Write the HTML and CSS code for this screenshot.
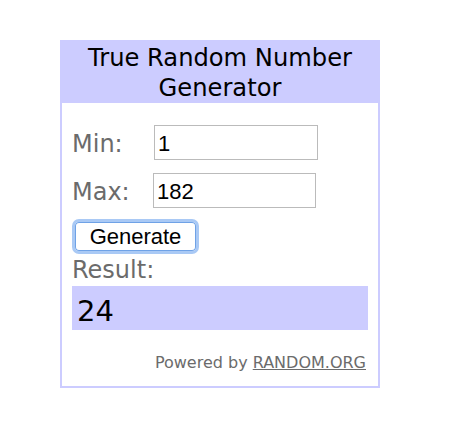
FILE: index.html
```html
<!DOCTYPE html>
<html>
<head>
<meta charset="utf-8">
<link rel="stylesheet" href="styles.css">
</head>
<body>
<div class="widget">
  <div class="header">True Random Number<br>Generator</div>
  <div class="content">
    <div class="row">
      <span class="label">Min:</span>
      <input class="field" type="text" value="1">
    </div>
    <div class="row">
      <span class="label">Max:</span>
      <input class="field field-max" type="text" value="182">
    </div>
    <button class="generate">Generate</button>
    <div class="result-label">Result:</div>
    <div class="result">24</div>
    <div class="powered">Powered by <a class="link" href="#">RANDOM.ORG</a></div>
  </div>
</div>
</body>
</html>
```

FILE: styles.css
```css
html, body {
  margin: 0;
  padding: 0;
  background: #ffffff;
}

body {
  padding: 40px 0 0 60px;
  font-family: "DejaVu Sans", Verdana, sans-serif;
}

.widget {
  width: 320px;
  box-sizing: border-box;
  border: 2px solid #ccccff;
  border-top: none;
  background: #ffffff;
}

.header {
  margin: 0 -2px;
  background: #ccccff;
  height: 63px;
  box-sizing: border-box;
  padding-top: 3px;
  text-align: center;
  font-size: 24.2px;
  line-height: 30px;
  color: #000000;
}

.content {
  padding: 22px 10px 13px 10px;
}

.row {
  display: flex;
  align-items: center;
  height: 35px;
  margin-bottom: 13px;
}

.row:nth-child(2) {
  margin-bottom: 11px;
}

.label {
  width: 82px;
  font-size: 24px;
  color: #6b6b6b;
  padding-top: 2px;
}

.field {
  width: 164px;
  height: 35px;
  box-sizing: border-box;
  border: 1px solid #bbbbbb;
  padding: 2px 3px 0 3px;
  margin: 0;
  font-family: "Liberation Sans", Arial, sans-serif;
  font-size: 22px;
  color: #000000;
  outline: none;
  background: #ffffff;
}

.field-max {
  width: 163px;
  margin-left: -1px;
}

.generate {
  display: block;
  width: 127px;
  height: 35px;
  margin: 0;
  box-sizing: border-box;
  border: 3px solid #a9c9f5;
  border-radius: 7px;
  box-shadow: inset 0 0 0 1px #6fa2e6;
  background: #ffffff;
  font-family: "Liberation Sans", Arial, sans-serif;
  font-size: 22px;
  line-height: 27px;
  padding: 0;
  color: #000000;
}

.result-label {
  margin-top: 1px;
  font-size: 24px;
  line-height: 30px;
  color: #6b6b6b;
}

.result {
  margin-top: 1px;
  height: 44px;
  box-sizing: border-box;
  padding: 3px 0 0 5px;
  background: #ccccff;
  font-size: 29px;
  line-height: 44px;
  color: #000000;
}

.powered {
  margin-top: 23px;
  text-align: right;
  padding-right: 2px;
  font-size: 16px;
  line-height: 20px;
  color: #6b6b6b;
}

.link {
  color: #6b6b6b;
  text-decoration: underline;
}
```
